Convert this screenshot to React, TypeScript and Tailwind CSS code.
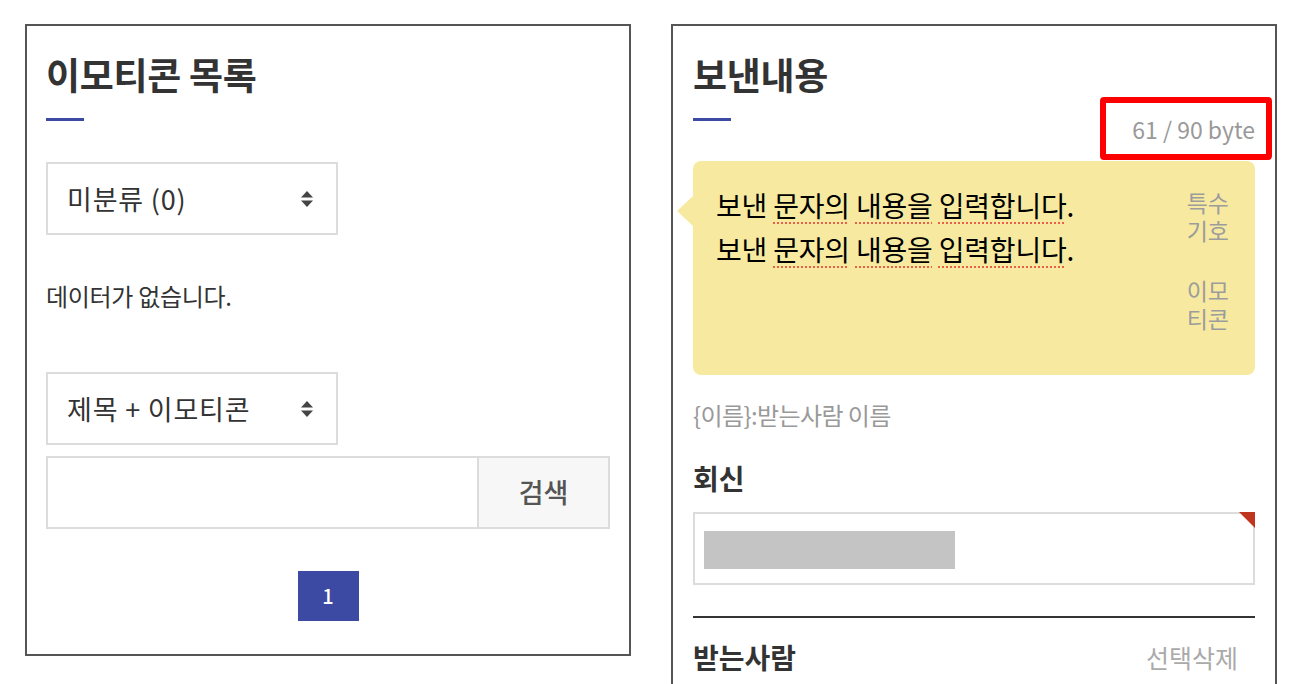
import React from "react";

const font = { fontFamily: '"Noto Sans CJK KR", "Noto Sans", sans-serif' };

const SortArrows = () => (
    <svg width="14" height="18" viewBox="0 0 14 18" className="shrink-0">
        <path d="M7 1 L13 7.5 L1 7.5 Z" fill="#444" />
        <path d="M1 10.5 L13 10.5 L7 17 Z" fill="#444" />
    </svg>
);

const SelectBox = ({ label }: { label: string }) => {
    return (
        <div className="flex items-center justify-between w-[292px] h-[73px] border-2 border-[#dcdcdc] pl-[19px] pr-[22px]">
            <span className="text-[27px] leading-[30px] text-[#333] tracking-[0.8px]">{label}</span>
            <SortArrows />
        </div>
    );
};

const EmoticonList = () => {
    return (
        <div className="w-[606px] h-[632px] border-2 border-[#555] px-[19px] pt-[28px] shrink-0">
            <h2 className="text-[37px] leading-[40px] font-bold text-[#333] tracking-[-0.3px]">이모티콘 목록</h2>
            <div className="mt-[24px] w-[38px] h-[3px] bg-[#3d4aa3]" />
            <div className="mt-[41px]">
                <SelectBox label="미분류 (0)" />
            </div>
            <p className="mt-[48px] text-[24px] leading-[26px] text-[#333] tracking-[-0.3px]">데이터가 없습니다.</p>
            <div className="mt-[63px]">
                <SelectBox label="제목 + 이모티콘" />
            </div>
            <div className="mt-[11px] flex h-[73px] border-2 border-[#dcdcdc]">
                <div className="flex-1" />
                <button className="w-[131px] border-l-2 border-[#dcdcdc] bg-[#f7f7f7] text-[27px] font-medium text-[#555]">
                    검색
                </button>
            </div>
            <div className="mt-[42px] flex justify-center">
                <div className="w-[61px] h-[50px] bg-[#3d4aa3] flex items-center justify-center text-white text-[20px] font-medium">
                    1
                </div>
            </div>
        </div>
    );
};

const Spell = ({ children }: { children: React.ReactNode }) => (
    <span className="underline decoration-dotted decoration-[#e8604a] decoration-2 underline-offset-[5px]">{children}</span>
);

const MessageLine = () => (
    <div>
        보낸 <Spell>문자의</Spell> <Spell>내용을</Spell> <Spell>입력합니다</Spell>.
    </div>
);

const SendContent = () => {
    return (
        <div className="relative w-[606px] h-[700px] border-2 border-[#555] px-[20px] pt-[28px] shrink-0">
            <h2 className="text-[37px] leading-[40px] font-bold text-[#333] tracking-[-0.3px]">보낸내용</h2>
            <div className="flex items-start justify-between">
                <div className="mt-[24px] w-[38px] h-[3px] bg-[#3d4aa3]" />
                <span className="mt-[22px] text-[23px] leading-[26px] text-[#999]">61 / 90 byte</span>
            </div>

            <div className="relative mt-[19px] h-[214px] rounded-[8px] bg-[#f7eaa0] flex justify-between pl-[23px] pr-[26px]">
                <svg width="16" height="30" viewBox="0 0 16 30" className="absolute left-[-16px] top-[35px]">
                    <path d="M16 0 L0 15 L16 30 Z" fill="#f7eaa0" />
                </svg>
                <div className="pt-[22px] text-[28px] leading-[44px] text-black tracking-[-0.2px]">
                    <MessageLine />
                    <MessageLine />
                </div>
                <div className="pt-[27px] text-[23px] leading-[28px] text-[#9c9c9c]">
                    <p>
                        특수
                        <br />
                        기호
                    </p>
                    <p className="mt-[32px]">
                        이모
                        <br />
                        티콘
                    </p>
                </div>
            </div>

            <p className="mt-[27px] text-[24px] leading-[26px] text-[#999] tracking-[-0.6px]">{"{이름}:받는사람 이름"}</p>

            <p className="mt-[34px] text-[28px] leading-[32px] font-bold text-[#333]">회신</p>

            <div className="relative mt-[18px] h-[73px] border-2 border-[#dcdcdc] pl-[9px] pt-[17px]">
                <div className="w-[251px] h-[38px] bg-[#c4c4c4]" />
                <svg width="16" height="16" viewBox="0 0 16 16" className="absolute right-[-2px] top-[-2px]">
                    <path d="M0 0 L16 0 L16 16 Z" fill="#c0351d" />
                </svg>
            </div>

            <div className="mt-[31px] h-[2px] bg-[#333]" />

            <div className="mt-[23px] flex items-center justify-between pr-[17px]">
                <span className="text-[28px] leading-[32px] font-bold text-[#333]">받는사람</span>
                <span className="text-[25px] leading-[32px] text-[#aaa]">선택삭제</span>
            </div>

            {/* highlight marker around the byte counter */}
            <div className="absolute left-[427px] top-[71px] w-[172px] h-[63px] border-[6px] border-[#ff0000] rounded-[4px]" />
        </div>
    );
};

export default function App() {
    return (
        <div style={font} className="h-[684px] overflow-hidden bg-white flex gap-[40px] pl-[25px] pt-[24px]">
            <EmoticonList />
            <SendContent />
        </div>
    );
}
